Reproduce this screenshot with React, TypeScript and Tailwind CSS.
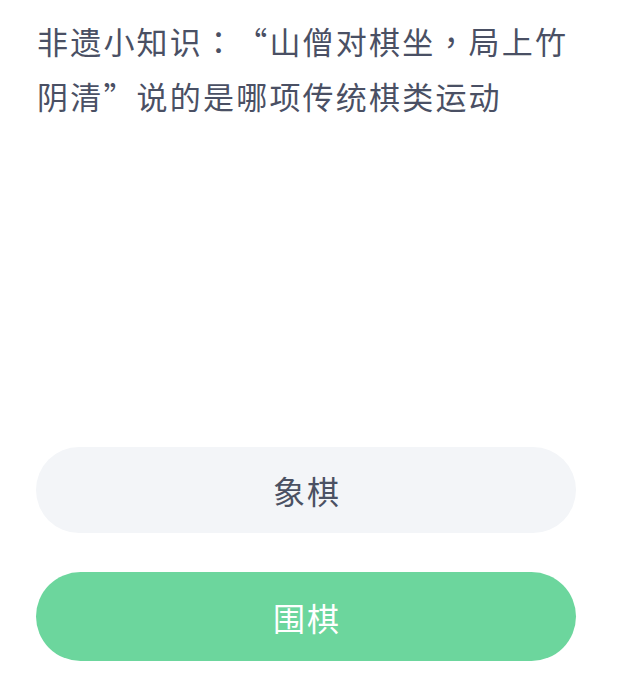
function Option({ label, active }: { label: string; active?: boolean }) {
  return (
    <button
      className={
        active
          ? "h-[89px] w-full rounded-full bg-[#6cd69d] text-[32px] tracking-[2px] indent-[2px] text-white"
          : "h-[86px] w-full rounded-full bg-[#f3f5f8] text-[32px] tracking-[2px] indent-[2px] text-[#4b5163]"
      }
    >
      {label}
    </button>
  );
}

export default function App() {
  return (
    <div className="w-[638px] h-[686px] bg-white overflow-hidden font-['Noto_Sans_CJK_SC','Noto_Sans',sans-serif]">
      {/* question */}
      <p className="ml-[37px] mt-[13px] w-[548px] [text-spacing-trim:space-all] text-[31px] leading-[55px] tracking-[2.2px] text-[#4a5064]">
        非遗小知识
        <span className="font-['Noto_Sans_CJK_TC',sans-serif]">：</span>
        “山僧对棋坐
        <span className="font-['Noto_Sans_CJK_TC',sans-serif]">，</span>
        局上竹阴清”说的是哪项传统棋类运动
      </p>

      {/* options */}
      <div className="mt-[324px] px-[36px] w-[612px] flex flex-col gap-[39px]">
        <Option label="象棋" />
        <Option label="围棋" active />
      </div>
    </div>
  );
}
